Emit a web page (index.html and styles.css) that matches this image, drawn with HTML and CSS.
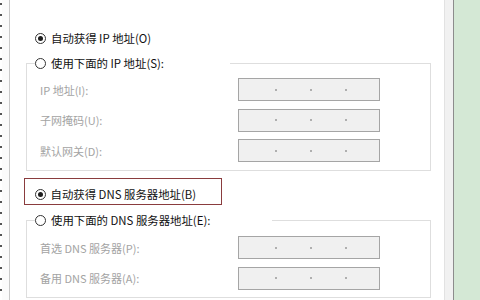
FILE: index.html
```html
<!DOCTYPE html>
<html lang="zh-CN">
<head>
<meta charset="utf-8">
<link rel="stylesheet" href="styles.css">
</head>
<body>
<div class="screen">
  <div class="edge-left"></div>
  <div class="dialog">
    <div class="radio-row top-radio">
      <span class="radio checked"></span><span class="rtext">自动获得 IP 地址(O)</span>
    </div>
    <fieldset class="group group-ip">
      <legend class="legend">
        <span class="radio"></span><span class="rtext">使用下面的 IP 地址(S):</span>
      </legend>
      <div class="field-row">
        <span class="flabel">IP 地址(I):</span>
        <span class="ipbox"><span class="dot"></span><span class="dot"></span><span class="dot"></span></span>
      </div>
      <div class="field-row">
        <span class="flabel">子网掩码(U):</span>
        <span class="ipbox"><span class="dot"></span><span class="dot"></span><span class="dot"></span></span>
      </div>
      <div class="field-row">
        <span class="flabel">默认网关(D):</span>
        <span class="ipbox"><span class="dot"></span><span class="dot"></span><span class="dot"></span></span>
      </div>
    </fieldset>
    <div class="highlight">
      <div class="radio-row">
        <span class="radio checked"></span><span class="rtext">自动获得 DNS 服务器地址(B)</span>
      </div>
    </div>
    <fieldset class="group group-dns">
      <legend class="legend legend-dns">
        <span class="radio"></span><span class="rtext">使用下面的 DNS 服务器地址(E):</span>
      </legend>
      <div class="field-row">
        <span class="flabel">首选 DNS 服务器(P):</span>
        <span class="ipbox"><span class="dot"></span><span class="dot"></span><span class="dot"></span></span>
      </div>
      <div class="field-row">
        <span class="flabel">备用 DNS 服务器(A):</span>
        <span class="ipbox"><span class="dot"></span><span class="dot"></span><span class="dot"></span></span>
      </div>
    </fieldset>
  </div>
  <div class="edge-right"></div>
  <div class="green"></div>
</div>
</body>
</html>
```

FILE: styles.css
```css
html, body {
  margin: 0;
  padding: 0;
  background: #ffffff;
}
body {
  width: 480px;
  height: 300px;
  overflow: hidden;
  font-family: "Noto Sans CJK SC", "Noto Sans", "Liberation Sans", sans-serif;
  font-size: 11px;
  color: #111111;
}
.screen {
  display: flex;
  width: 480px;
  height: 300px;
}
.edge-left {
  width: 9px;
  flex: none;
  border-right: 1px solid #c9c9c9;
  background:
    repeating-linear-gradient(to bottom, #ffffff 0, #ffffff 3px, #555555 3px, #555555 5px, #ffffff 5px, #ffffff 11px) left top / 2px 100% no-repeat,
    #fbfbfb;
}
.dialog {
  width: 434px;
  flex: none;
  display: flex;
  flex-direction: column;
  align-items: flex-start;
  padding-top: 30px;
  box-sizing: border-box;
  background: #ffffff;
}
.edge-right {
  width: 8px;
  flex: none;
  background: #f1f1f1;
  border-left: 1px solid #e2e2e2;
  border-right: 1px solid #8c8c8c;
}
.green {
  flex: 1;
  background: #d4e8d5;
}
.radio-row {
  display: flex;
  align-items: center;
  height: 16px;
}
.top-radio {
  margin-left: 25px;
}
.radio {
  width: 9px;
  height: 9px;
  border: 1px solid #333333;
  border-radius: 50%;
  box-sizing: content-box;
  display: inline-flex;
  align-items: center;
  justify-content: center;
  background: #ffffff;
  flex: none;
}
.radio.checked::after {
  content: "";
  width: 5px;
  height: 5px;
  border-radius: 50%;
  background: #1e1e1e;
}
.rtext {
  margin-left: 5px;
  white-space: nowrap;
  line-height: 16px;
  font-size: 11.4px;
}
.group {
  margin: 9px 0 0 16px;
  padding: 7px 0 9px 13px;
  width: 405px;
  box-sizing: border-box;
  border: 1px solid #dedede;
  min-width: 0;
}
.legend {
  display: flex;
  align-items: center;
  height: 16px;
  padding: 0 66px 0 0;
  margin-left: -5px;
}
.legend-dns {
  padding-right: 62px;
}
.group-ip {
  height: 116px;
}
.group-dns {
  margin-top: 7px;
  padding-top: 8px;
  padding-bottom: 8px;
  height: 86px;
}
.field-row {
  display: flex;
  align-items: center;
  margin-bottom: 7.5px;
}
.field-row:last-child {
  margin-bottom: 0;
}
.flabel {
  width: 198px;
  flex: none;
  color: #a3a3a3;
  white-space: nowrap;
}
.ipbox {
  width: 142px;
  height: 23px;
  box-sizing: border-box;
  border: 1px solid #a5a5a5;
  background: #f0f0f0;
  display: flex;
  align-items: center;
  padding-left: 36px;
  gap: 33px;
}
.dot {
  width: 2px;
  height: 2px;
  border-radius: 50%;
  background: #9a9a9a;
  flex: none;
}
.highlight {
  margin: 7px 0 0 14px;
  width: 198px;
  height: 27px;
  box-sizing: border-box;
  border: 1.5px solid #8a3c3e;
  padding: 7px 0 0 9.5px;
}
```
